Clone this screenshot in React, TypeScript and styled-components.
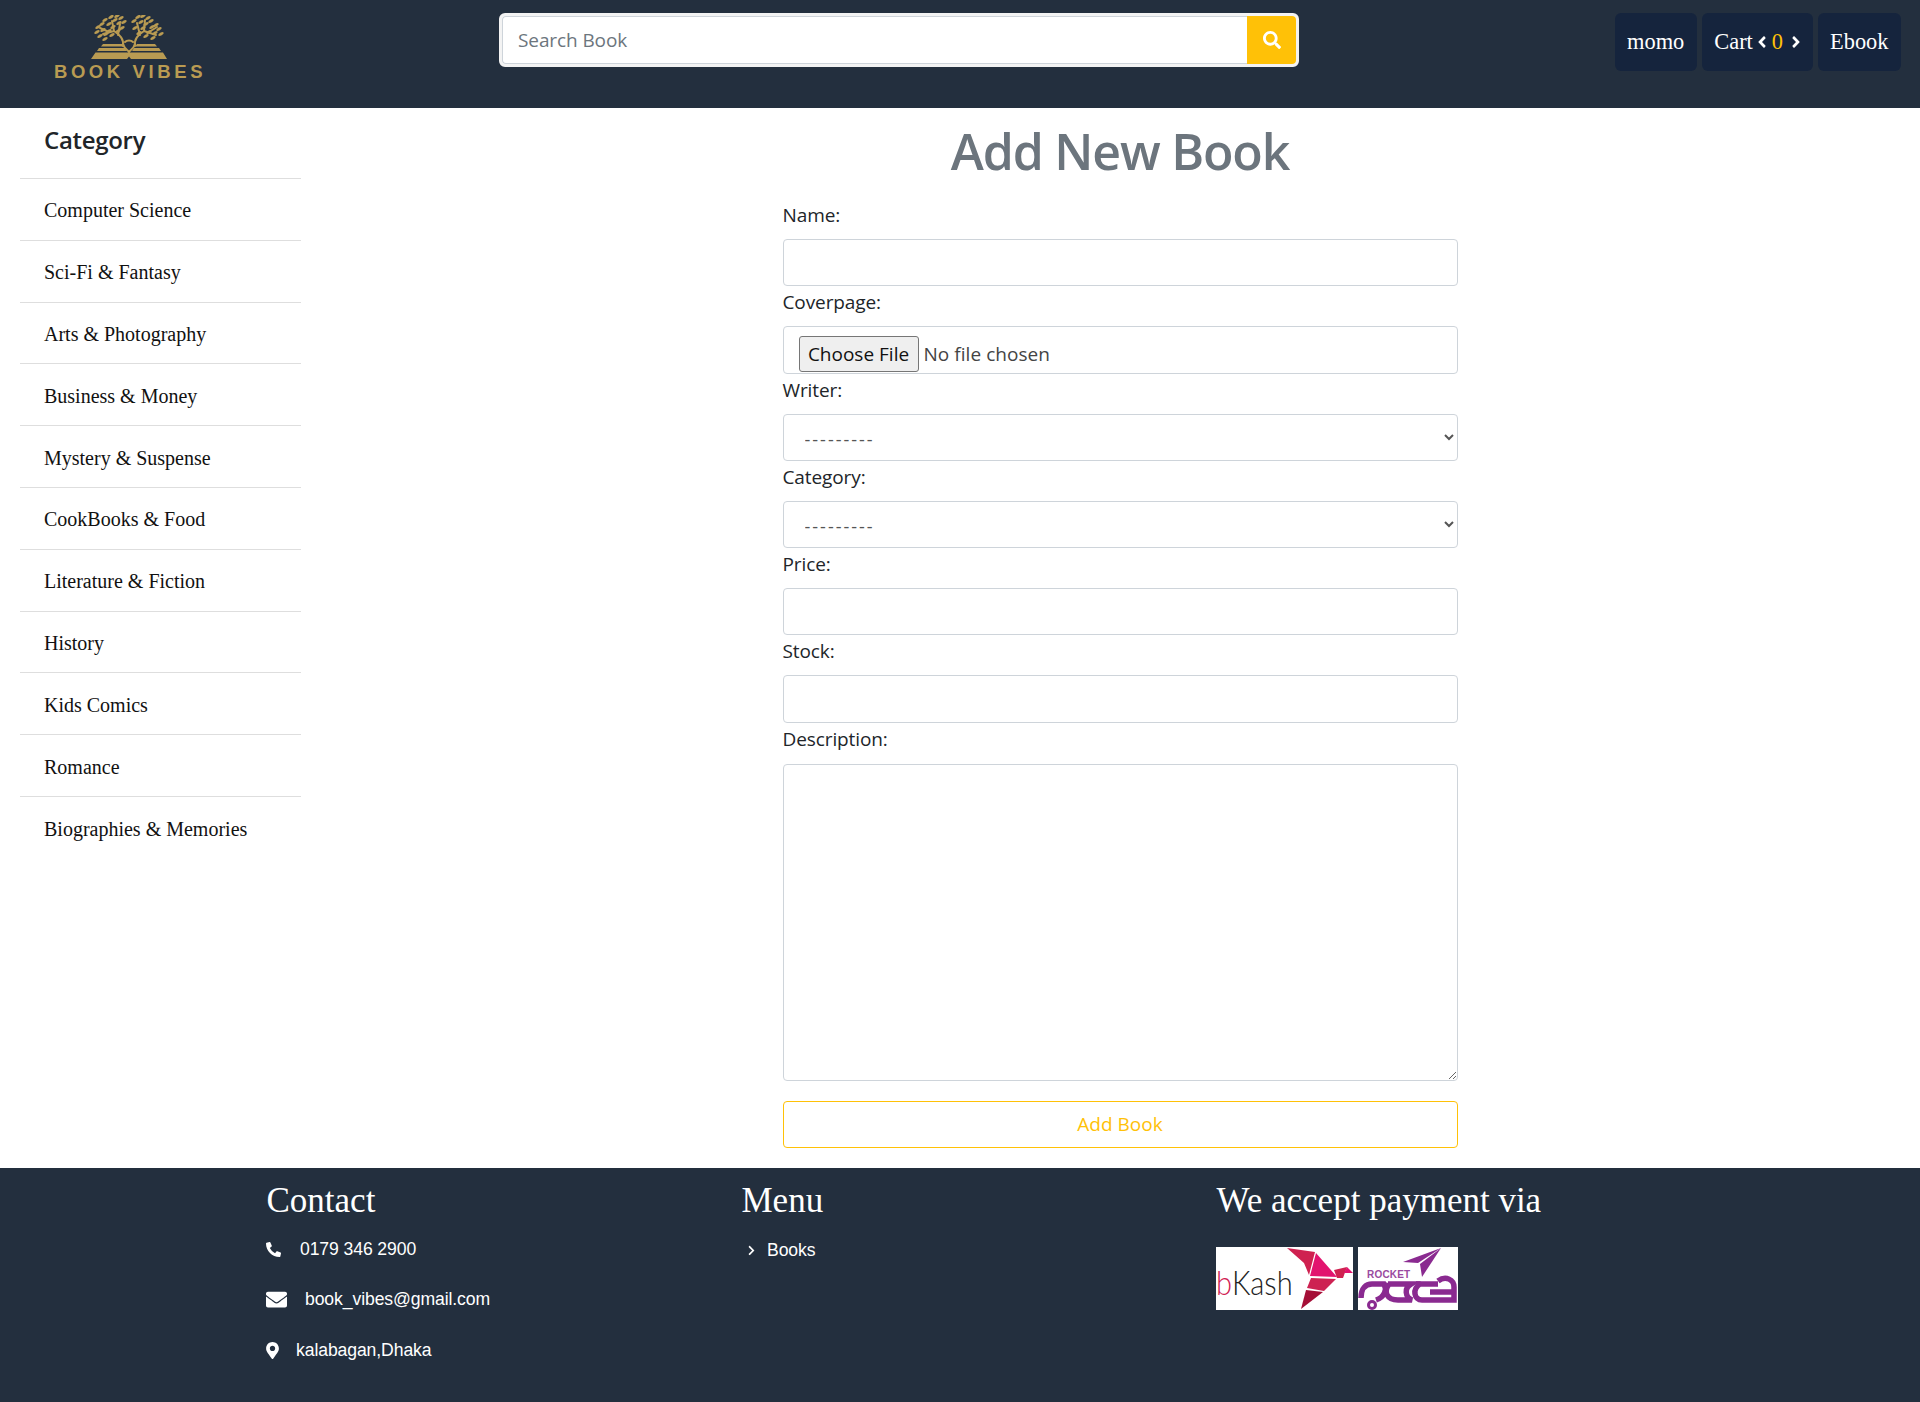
import styled, { createGlobalStyle } from 'styled-components';
import { FaAngleLeft, FaAngleRight, FaChevronRight, FaEnvelope, FaMapMarkerAlt, FaPhoneAlt, FaSearch } from 'react-icons/fa';

const GlobalStyle = createGlobalStyle`
  body {
    margin: 0;
    background: #fff;
    font-family: "Liberation Serif", serif;
  }
`;

const uiFont = `"Open Sans", "Noto Sans", sans-serif`;

const Page = styled.div`
  width: 1920px;
  min-height: 1402px;
  display: flex;
  flex-direction: column;
`;

const Header = styled.header`
  height: 108px;
  background: #232f3e;
  display: flex;
  align-items: flex-start;
  box-sizing: border-box;
  padding: 13px 19px 0 54px;
`;

const LogoWrap = styled.div`
  width: 150px;
  height: 66px;
  flex: none;
  display: flex;
  flex-direction: column;
  align-items: center;
  color: #b99b52;
  margin-top: 2px;
`;

const LogoText = styled.div`
  font: bold 18.5px/14px "Liberation Sans", sans-serif;
  letter-spacing: 3.6px;
  white-space: nowrap;
  margin: 5px 0 0 2px;
`;

const SearchBox = styled.form`
  width: 800px;
  height: 54px;
  margin-left: 295px;
  box-sizing: border-box;
  background: #fff;
  border: 3px solid #f3f3f3;
  border-radius: 6px;
  display: flex;
`;

const SearchInput = styled.input`
  flex: 1;
  min-width: 0;
  box-sizing: border-box;
  border: 1px solid #ced4da;
  border-right: 0;
  border-radius: 4px 0 0 4px;
  padding: 0 15px;
  font: 19px ${uiFont};
  letter-spacing: -0.1px;
  outline: none;
  &::placeholder {
    color: #6c757d;
    opacity: 1;
  }
`;

const SearchButton = styled.button`
  width: 49px;
  border: 0;
  padding: 0;
  background: #ffc107;
  border-radius: 0 4px 4px 0;
  color: #fff;
  display: flex;
  align-items: center;
  justify-content: center;
  font-size: 18px;
`;

const NavLinks = styled.nav`
  margin-left: auto;
  display: flex;
  gap: 5px;
`;

const NavButton = styled.a`
  height: 58px;
  box-sizing: border-box;
  padding: 0 12.5px;
  background: #15243d;
  border-radius: 6px;
  color: #fff;
  font-size: 22.4px;
  display: flex;
  align-items: center;
`;

const CartCount = styled.span`
  color: #ffc107;
  margin: 0 4px 0 1px;
`;

const CartClose = styled(FaAngleRight)`
  margin-right: -5px;
`;

const Body = styled.div`
  flex: 1;
  display: grid;
  grid-template-columns: 320px 1600px;
`;

const Sidebar = styled.aside`
  padding: 0 19px 0 20px;
`;

const SidebarTitle = styled.h2`
  margin: 0;
  height: 71px;
  box-sizing: border-box;
  padding: 14px 0 0 24px;
  font: 600 24px/36px ${uiFont};
  letter-spacing: -0.3px;
  color: #212529;
  border-bottom: 1px solid #dedede;
`;

const CategoryList = styled.ul`
  list-style: none;
  margin: 0;
  padding: 0;
`;

const CategoryItem = styled.li`
  height: 61.8px;
  box-sizing: border-box;
  padding: 3px 0 0 24px;
  display: flex;
  align-items: center;
  font-size: 20px;
  color: #111;
  border-bottom: 1px solid #dedede;
  &:last-child {
    border-bottom: 0;
  }
`;

const Main = styled.main`
  display: flex;
  flex-direction: column;
  align-items: center;
`;

const Title = styled.h1`
  margin: 0;
  height: 95px;
  box-sizing: border-box;
  padding-top: 12px;
  font: 600 50px/62px ${uiFont};
  letter-spacing: -1.2px;
  color: #6c757d;
`;

const BookForm = styled.form`
  width: 675px;
  font-family: ${uiFont};
  display: flex;
  flex-direction: column;
`;

const Label = styled.label`
  display: block;
  font-size: 19px;
  line-height: 24px;
  letter-spacing: -0.1px;
  color: #212529;
  margin: 0 0 12px;
`;

const fieldBase = `
  display: block;
  width: 100%;
  box-sizing: border-box;
  border: 1px solid #ced4da;
  border-radius: 4px;
  background: #fff;
  outline: none;
`;

const TextInput = styled.input`
  ${fieldBase}
  height: 47.2px;
  margin-bottom: 4px;
`;

const FileInput = styled.input`
  ${fieldBase}
  height: 48px;
  margin-bottom: 4px;
  padding: 9px 15px 2px;
  font: 19px ${uiFont};
  letter-spacing: 0.05px;
  color: #444;
  &::file-selector-button {
    height: 36px;
    width: 120px;
    font: 19px ${uiFont};
    color: #111;
    background: #efefef;
    border: 1px solid #767676;
    border-radius: 3px;
    margin-right: 5px;
  }
`;

const SelectInput = styled.select`
  ${fieldBase}
  height: 47px;
  margin-bottom: 4px;
  padding: 2px 0 0 17px;
  font: 18px ${uiFont};
  letter-spacing: 2px;
  color: #555;
`;

const TextArea = styled.textarea`
  ${fieldBase}
  height: 317px;
  margin: 1px 0 20px;
`;

const SubmitButton = styled.button`
  width: 100%;
  height: 47px;
  background: #fff;
  border: 1px solid #ffc107;
  border-radius: 4px;
  color: #ffc107;
  font: 19px ${uiFont};
`;

const Footer = styled.footer`
  height: 234px;
  background: #232f3e;
  color: #fff;
  box-sizing: border-box;
  padding: 10px 0 0 266px;
  display: grid;
  grid-template-columns: 475px 475px 475px;
`;

const FooterColumn = styled.div`
  display: flex;
  flex-direction: column;
`;

const FooterTitle = styled.h3`
  margin: 0 0 0 0.5px;
  font-size: 35px;
  line-height: 46px;
  font-weight: 400;
`;

const ContactRow = styled.div<{ $gap: number }>`
  height: 50.5px;
  display: flex;
  align-items: center;
  gap: ${(p) => p.$gap}px;
  font: 17.6px "Liberation Sans", sans-serif;
  letter-spacing: -0.1px;
`;

const PinIcon = styled(FaMapMarkerAlt)`
  width: 13px;
  height: 17px;
`;

const MenuLink = styled.a`
  margin: 6px 0 0 5px;
  height: 40px;
  display: flex;
  align-items: center;
  gap: 10px;
  font: 17.6px "Liberation Sans", sans-serif;
  letter-spacing: -0.1px;
  color: #fff;
`;

const PaymentLogos = styled.div`
  margin-top: 23px;
  display: flex;
  gap: 5px;
`;

const PaymentCard = styled.svg`
  display: block;
  background: #fff;
`;

const categories = [
  'Computer Science',
  'Sci-Fi & Fantasy',
  'Arts & Photography',
  'Business & Money',
  'Mystery & Suspense',
  'CookBooks & Food',
  'Literature & Fiction',
  'History',
  'Kids Comics',
  'Romance',
  'Biographies & Memories',
];

// rough leaf cluster of the two trees in the logo
const leaves = [
  [7, 12], [11, 9], [6, 17], [12, 15], [9, 21], [15, 19], [14, 5], [18, 9], [20, 2], [24, 5], [26, 1], [30, 3],
  [28, 8], [22, 12], [31, 13], [18, 16], [27, 16], [33, 7], [21, 20], [14, 24],
  [43, 6], [47, 2], [52, 1], [57, 3], [50, 7], [55, 9], [60, 6], [44, 13], [52, 13], [61, 12], [65, 10], [68, 14],
  [58, 17], [64, 18], [70, 19], [55, 21], [62, 23], [48, 18],
];

const Logo = () => (
  <svg width="76" height="45" viewBox="0 0 76 45">
    <g fill="none" stroke="currentColor" strokeWidth="2" strokeLinecap="round">
      <path d="M32 31C33 24 29 20 23 16M23 16L12 19M23 16L21 6M27 20L29 9M18 17L9 13" />
      <path d="M44 31C43 24 47 20 53 16M53 16L65 20M53 16L54 5M49 20L46 8M58 17L66 12" />
      <path d="M32 29C34 35 37 35 38 37C39 35 42 35 44 29M34 27C36 25 40 25 42 27" />
    </g>
    <g fill="currentColor">
      {leaves.map(([x, y]) => (
        <ellipse key={`${x}-${y}`} cx={x} cy={y} rx="3" ry="1.5" transform={`rotate(-30 ${x} ${y})`} />
      ))}
      <path d="M12 29H31L33 31.5H10Z" />
      <path d="M44 31.5L46 29H64L66 31.5Z" />
      <path d="M8 33H34L36 36H6Z" />
      <path d="M41 36L43 33H68L70 36Z" />
      <path d="M4.5 37.5H72L76 44H40L38 41.5L36 44H0Z" />
    </g>
  </svg>
);

const BkashLogo = () => (
  <PaymentCard width="137" height="63" viewBox="0 0 137 63">
    <text x="0" y="48" transform="scale(0.88 1)" fontFamily="Lato, sans-serif" fontWeight="300" fontSize="33" fill="#222">
      <tspan fill="#d12053">b</tspan>Kash
    </text>
    <polygon points="71,1 99,5 93,28 88,16" fill="#cf2150" />
    <polygon points="100,6 121,30 94,29" fill="#e2136e" />
    <polygon points="118,23 131,20 127,31 121,31" fill="#cf2150" />
    <polygon points="131,20 137,26 128,26" fill="#e2136e" />
    <polygon points="95,31 120,32 108,44 91,41" fill="#cd2252" />
    <polygon points="90,43 107,45 85,62" fill="#a50f37" />
  </PaymentCard>
);

const RocketLogo = () => (
  <PaymentCard width="100" height="63" viewBox="0 0 100 63">
    <polygon points="83,1 45,15 60,16" fill="#8a2a90" />
    <polygon points="83,1 62,17 64,30" fill="#8a2a90" />
    <text x="9" y="31" fontFamily="Liberation Sans, sans-serif" fontWeight="700" fontSize="10" letterSpacing="0.2" fill="#9a4aa0">
      ROCKET
    </text>
    <g fill="none" stroke="#8a2a90" strokeWidth="5.5">
      <path d="M3 51C3 41 8 37 14 37H26C29 42 27 50 18 53" />
      <path d="M31 37C25 45 29 53 40 53H54C47 50 46 41 53 37H30" />
      <path d="M62 37C54 42 56 53 64 53H96V40C96 33 88 28 80 34M72 45H96M58 37H80" />
    </g>
    <circle cx="14" cy="58" r="3.5" fill="none" stroke="#8a2a90" strokeWidth="3" />
  </PaymentCard>
);

const App = () => {
  return (
    <Page>
      <GlobalStyle />
      <Header>
        <LogoWrap>
          <Logo />
          <LogoText>BOOK VIBES</LogoText>
        </LogoWrap>
        <SearchBox>
          <SearchInput placeholder="Search Book" />
          <SearchButton type="button">
            <FaSearch />
          </SearchButton>
        </SearchBox>
        <NavLinks>
          <NavButton>momo</NavButton>
          <NavButton>
            Cart
            <FaAngleLeft size={18} />
            <CartCount>0</CartCount>
            <CartClose size={18} />
          </NavButton>
          <NavButton>Ebook</NavButton>
        </NavLinks>
      </Header>
      <Body>
        <Sidebar>
          <SidebarTitle>Category</SidebarTitle>
          <CategoryList>
            {categories.map((c) => (
              <CategoryItem key={c}>{c}</CategoryItem>
            ))}
          </CategoryList>
        </Sidebar>
        <Main>
          <Title>Add New Book</Title>
          <BookForm>
            <Label>Name:</Label>
            <TextInput type="text" />
            <Label>Coverpage:</Label>
            <FileInput type="file" />
            <Label>Writer:</Label>
            <SelectInput>
              <option>---------</option>
            </SelectInput>
            <Label>Category:</Label>
            <SelectInput>
              <option>---------</option>
            </SelectInput>
            <Label>Price:</Label>
            <TextInput type="text" />
            <Label>Stock:</Label>
            <TextInput type="text" />
            <Label>Description:</Label>
            <TextArea />
            <SubmitButton type="button">Add Book</SubmitButton>
          </BookForm>
        </Main>
      </Body>
      <Footer>
        <FooterColumn>
          <FooterTitle>Contact</FooterTitle>
          <ContactRow $gap={19}>
            <FaPhoneAlt size={15} />
            0179 346 2900
          </ContactRow>
          <ContactRow $gap={18}>
            <FaEnvelope size={21} />
            book_vibes@gmail.com
          </ContactRow>
          <ContactRow $gap={17}>
            <PinIcon />
            kalabagan,Dhaka
          </ContactRow>
        </FooterColumn>
        <FooterColumn>
          <FooterTitle>Menu</FooterTitle>
          <MenuLink>
            <FaChevronRight size={11} />
            Books
          </MenuLink>
        </FooterColumn>
        <FooterColumn>
          <FooterTitle>We accept payment via</FooterTitle>
          <PaymentLogos>
            <BkashLogo />
            <RocketLogo />
          </PaymentLogos>
        </FooterColumn>
      </Footer>
    </Page>
  );
};

export default App;
